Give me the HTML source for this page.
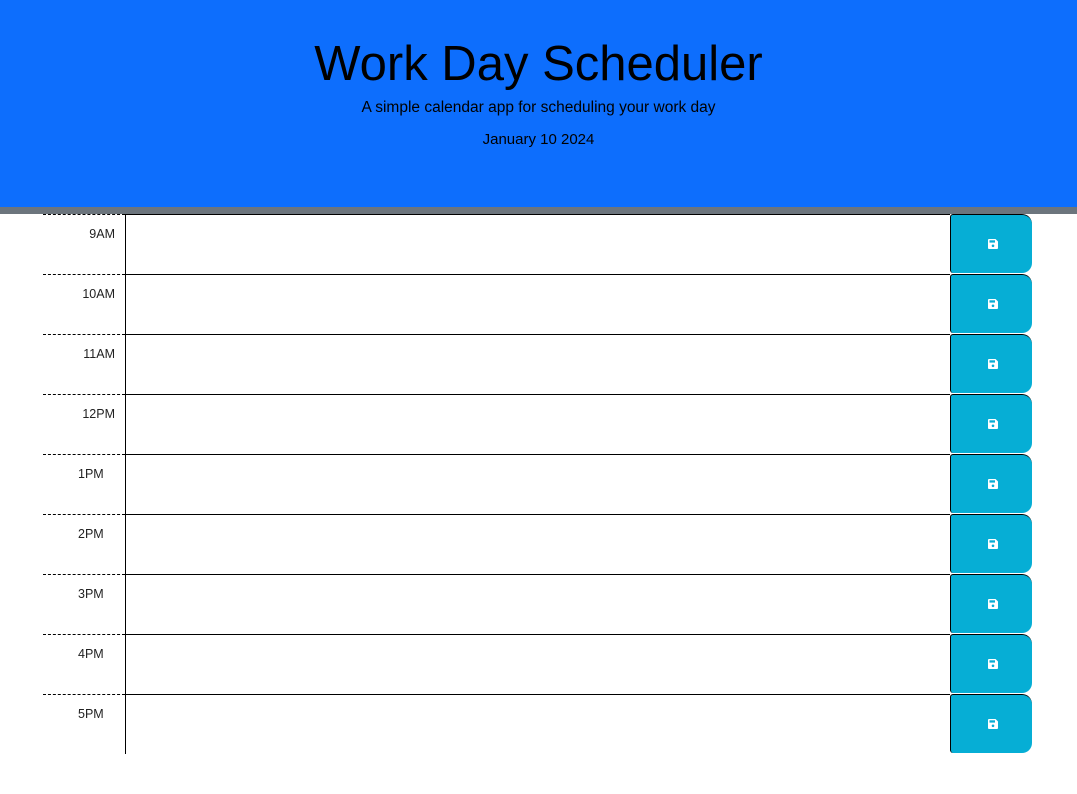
<!DOCTYPE html>
<html><head><style>
body{margin:0;background:#fff;font-family:"Liberation Sans",sans-serif;width:1077px;height:794px;overflow:hidden}
header{background:#0d6efd;height:207px;border-bottom:7px solid #6c757d;text-align:center;color:#000;position:relative}
h1{position:absolute;top:34px;left:0;right:0;margin:0;font-weight:400;font-size:49px;line-height:60px}
.sub{position:absolute;top:98px;left:0;right:0;font-size:15.5px;line-height:20px}
.date{position:absolute;top:130px;left:0;right:0;font-size:15px;line-height:20px}
.row{position:absolute;left:43px;width:989px;height:60px}
.hour{position:absolute;left:0;top:0;width:82px;height:59px;border-top:1px dashed #000;font-size:12.5px;color:#222;text-align:right;box-sizing:border-box;padding:12px 10px 0 0}
.ta{position:absolute;left:82px;top:0;width:825px;height:60px;border-top:1px solid #000;border-left:1px solid #000;box-sizing:border-box}
.btn{position:absolute;left:907px;top:0;width:82px;height:59px;background:#06aed5;border-left:1px solid #000;border-top:1px solid #000;border-radius:3px 10px 10px 3px;box-sizing:border-box}
.btn svg{position:absolute;left:37px;top:24px}
</style></head><body>
<header><h1>Work Day Scheduler</h1><div class="sub">A simple calendar app for scheduling your work day</div><div class="date">January 10 2024</div></header>
<div class="row" style="top:214px"><div class="hour">9AM</div><div class="ta"></div><div class="btn"><svg width="10" height="10" viewBox="0 0 10 10"><path d="M0 1a1 1 0 0 1 1-1h6.5L10 2.5V9a1 1 0 0 1-1 1H1a1 1 0 0 1-1-1z" fill="#fff"/><rect x="1.5" y="1.3" width="5.5" height="2.3" fill="#06aed5"/><circle cx="5" cy="6.8" r="1.3" fill="#06aed5"/></svg></div></div>
<div class="row" style="top:274px"><div class="hour">10AM</div><div class="ta"></div><div class="btn"><svg width="10" height="10" viewBox="0 0 10 10"><path d="M0 1a1 1 0 0 1 1-1h6.5L10 2.5V9a1 1 0 0 1-1 1H1a1 1 0 0 1-1-1z" fill="#fff"/><rect x="1.5" y="1.3" width="5.5" height="2.3" fill="#06aed5"/><circle cx="5" cy="6.8" r="1.3" fill="#06aed5"/></svg></div></div>
<div class="row" style="top:334px"><div class="hour">11AM</div><div class="ta"></div><div class="btn"><svg width="10" height="10" viewBox="0 0 10 10"><path d="M0 1a1 1 0 0 1 1-1h6.5L10 2.5V9a1 1 0 0 1-1 1H1a1 1 0 0 1-1-1z" fill="#fff"/><rect x="1.5" y="1.3" width="5.5" height="2.3" fill="#06aed5"/><circle cx="5" cy="6.8" r="1.3" fill="#06aed5"/></svg></div></div>
<div class="row" style="top:394px"><div class="hour">12PM</div><div class="ta"></div><div class="btn"><svg width="10" height="10" viewBox="0 0 10 10"><path d="M0 1a1 1 0 0 1 1-1h6.5L10 2.5V9a1 1 0 0 1-1 1H1a1 1 0 0 1-1-1z" fill="#fff"/><rect x="1.5" y="1.3" width="5.5" height="2.3" fill="#06aed5"/><circle cx="5" cy="6.8" r="1.3" fill="#06aed5"/></svg></div></div>
<div class="row" style="top:454px"><div class="hour" style="text-align:left;padding-left:35px">1PM</div><div class="ta"></div><div class="btn"><svg width="10" height="10" viewBox="0 0 10 10"><path d="M0 1a1 1 0 0 1 1-1h6.5L10 2.5V9a1 1 0 0 1-1 1H1a1 1 0 0 1-1-1z" fill="#fff"/><rect x="1.5" y="1.3" width="5.5" height="2.3" fill="#06aed5"/><circle cx="5" cy="6.8" r="1.3" fill="#06aed5"/></svg></div></div>
<div class="row" style="top:514px"><div class="hour" style="text-align:left;padding-left:35px">2PM</div><div class="ta"></div><div class="btn"><svg width="10" height="10" viewBox="0 0 10 10"><path d="M0 1a1 1 0 0 1 1-1h6.5L10 2.5V9a1 1 0 0 1-1 1H1a1 1 0 0 1-1-1z" fill="#fff"/><rect x="1.5" y="1.3" width="5.5" height="2.3" fill="#06aed5"/><circle cx="5" cy="6.8" r="1.3" fill="#06aed5"/></svg></div></div>
<div class="row" style="top:574px"><div class="hour" style="text-align:left;padding-left:35px">3PM</div><div class="ta"></div><div class="btn"><svg width="10" height="10" viewBox="0 0 10 10"><path d="M0 1a1 1 0 0 1 1-1h6.5L10 2.5V9a1 1 0 0 1-1 1H1a1 1 0 0 1-1-1z" fill="#fff"/><rect x="1.5" y="1.3" width="5.5" height="2.3" fill="#06aed5"/><circle cx="5" cy="6.8" r="1.3" fill="#06aed5"/></svg></div></div>
<div class="row" style="top:634px"><div class="hour" style="text-align:left;padding-left:35px">4PM</div><div class="ta"></div><div class="btn"><svg width="10" height="10" viewBox="0 0 10 10"><path d="M0 1a1 1 0 0 1 1-1h6.5L10 2.5V9a1 1 0 0 1-1 1H1a1 1 0 0 1-1-1z" fill="#fff"/><rect x="1.5" y="1.3" width="5.5" height="2.3" fill="#06aed5"/><circle cx="5" cy="6.8" r="1.3" fill="#06aed5"/></svg></div></div>
<div class="row" style="top:694px"><div class="hour" style="text-align:left;padding-left:35px">5PM</div><div class="ta"></div><div class="btn"><svg width="10" height="10" viewBox="0 0 10 10"><path d="M0 1a1 1 0 0 1 1-1h6.5L10 2.5V9a1 1 0 0 1-1 1H1a1 1 0 0 1-1-1z" fill="#fff"/><rect x="1.5" y="1.3" width="5.5" height="2.3" fill="#06aed5"/><circle cx="5" cy="6.8" r="1.3" fill="#06aed5"/></svg></div></div>
</body></html>
